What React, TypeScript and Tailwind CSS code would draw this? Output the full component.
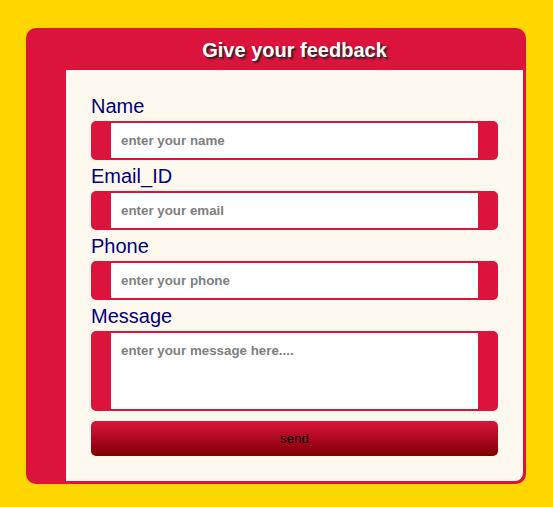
import React from 'react';

const fields = [
  { label: 'Name', placeholder: 'enter your name', type: 'text' },
  { label: 'Email_ID', placeholder: 'enter your email', type: 'email' },
  { label: 'Phone', placeholder: 'enter your phone', type: 'tel' },
];

const App: React.FC = () => {
  return (
    <div className="min-h-[507px] w-full bg-[#FFD700] pt-[28px] pl-[26px] font-['Liberation_Sans',Arial,sans-serif]">
      <div className="w-[500px] rounded-[10px] bg-[#DC143C] pl-[40px] pr-[3px] pb-[3px]">
        <h1 className="h-[42px] pt-[11px] text-center text-[20px] leading-[23px] font-bold text-white [text-shadow:2px_2px_2px_#222]">
          Give your feedback
        </h1>
        <form className="rounded-br-[8px] bg-[#FEF9EE] px-[25px] pt-[24px] pb-[25px]">
          {fields.map((field) => (
            <div key={field.label} className="mb-[4px]">
              <label className="block h-[24px] mb-[3px] text-[20px] leading-[24px] text-[#000080]">
                {field.label}
              </label>
              <input
                type={field.type}
                placeholder={field.placeholder}
                className="block h-[39px] w-full rounded-[5px] border-y-2 border-x-[20px] border-[#DC143C] bg-white px-[10px] text-[13.33px] font-bold text-gray-700 outline-none placeholder:text-[#808080]"
              />
            </div>
          ))}
          <label className="block h-[24px] mb-[3px] text-[20px] leading-[24px] text-[#000080]">
            Message
          </label>
          <textarea
            placeholder="enter your message here...."
            className="block h-[80px] w-full resize-none rounded-[5px] border-y-2 border-x-[20px] border-[#DC143C] bg-white px-[10px] pt-[10px] text-[13.33px] leading-[15px] font-bold text-gray-700 outline-none placeholder:text-[#808080]"
          />
          <button
            type="button"
            className="mt-[10px] block h-[35px] w-full rounded-[5px] bg-gradient-to-b from-[#DC143C] to-[#800000] text-[13.33px] text-black"
          >
            send
          </button>
        </form>
      </div>
    </div>
  );
};

export default App;
